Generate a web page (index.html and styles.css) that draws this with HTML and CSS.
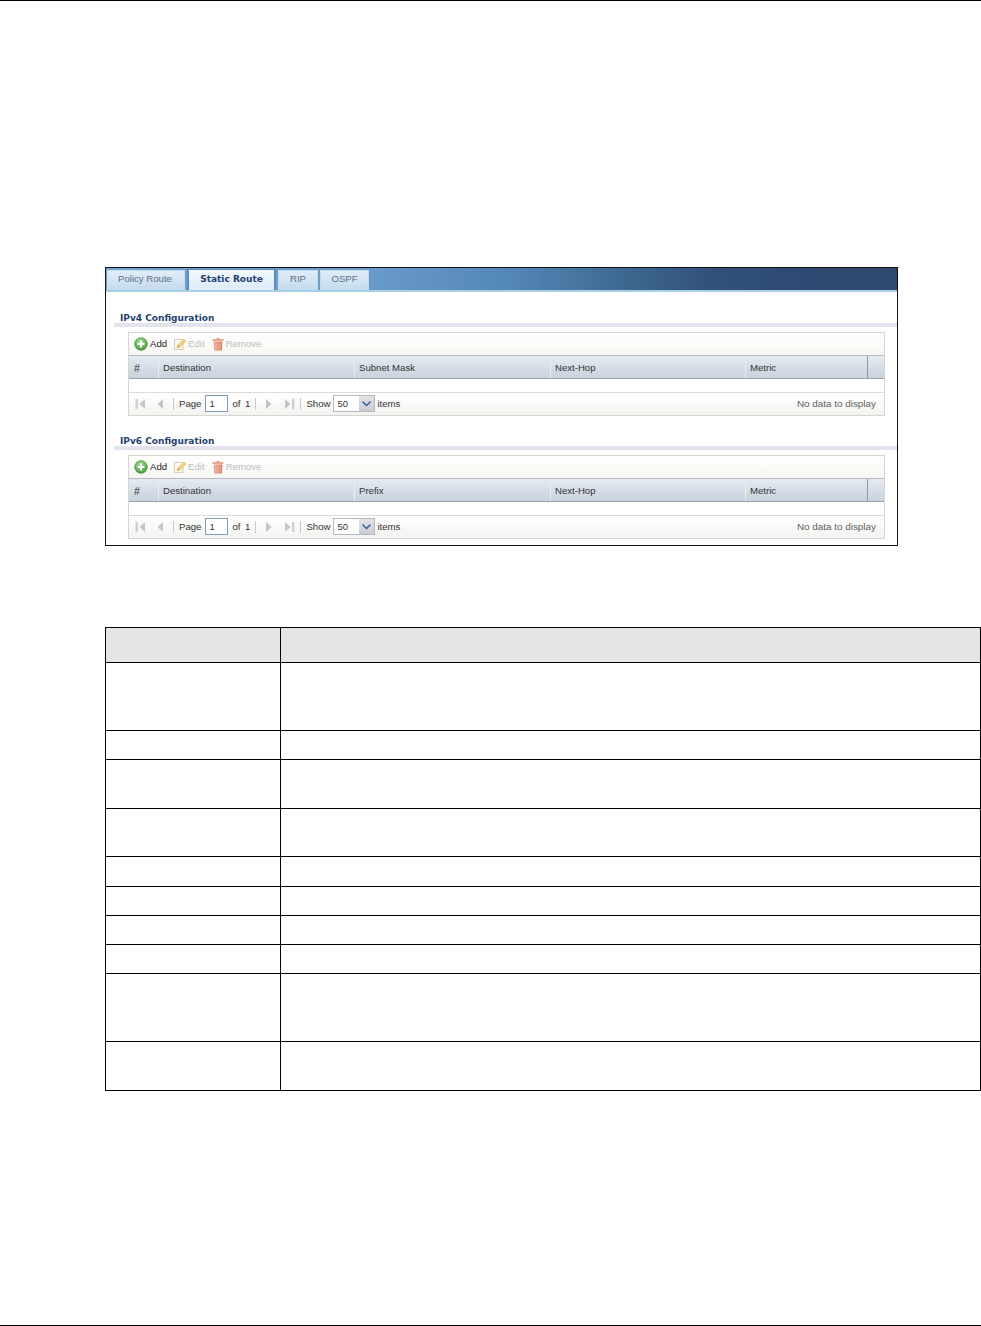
FILE: index.html
```html
<!DOCTYPE html>
<html lang="en">
<head>
<meta charset="utf-8">
<title>Static Route</title>
<link rel="stylesheet" href="styles.css">
</head>
<body>
<svg class="defs" width="0" height="0" aria-hidden="true">
  <defs>
    <radialGradient id="g-add" cx="45%" cy="35%" r="70%">
      <stop offset="0" stop-color="#b7e3a0"/><stop offset="0.6" stop-color="#66b65a"/><stop offset="1" stop-color="#3b8a3e"/>
    </radialGradient>
    <linearGradient id="g-bin" x1="0" x2="1" y1="0" y2="0">
      <stop offset="0" stop-color="#e9a48e"/><stop offset="0.5" stop-color="#e27f63"/><stop offset="1" stop-color="#d96f52"/>
    </linearGradient>
    <symbol id="i-add" viewBox="0 0 14 14">
      <circle cx="7" cy="7" r="6.3" fill="url(#g-add)" stroke="#4f9a4a" stroke-width="0.8"/>
      <path d="M7 3.6v6.8M3.6 7h6.8" stroke="#fff" stroke-width="2"/>
    </symbol>
    <symbol id="i-edit" viewBox="0 0 14 14">
      <path d="M1.5 2.5h8.5v10h-8.5z" fill="#fbf8ea" stroke="#cfc9ae"/>
      <path d="M4 11l1-3 6-6 2 2-6 6z" fill="#f0c860" stroke="#e0b050" stroke-width="0.5"/>
      <path d="M4 11l1-3 2 2z" fill="#d98f6a"/>
    </symbol>
    <symbol id="i-bin" viewBox="0 0 12 14">
      <path d="M4.5 1h3v1.2h-3z" fill="#d98a72"/>
      <path d="M0.5 2h11v2h-11z" fill="#e39a84"/>
      <path d="M1.5 4.5h9l-0.6 9h-7.8z" fill="url(#g-bin)"/>
      <path d="M4 6v6M6 6v6M8 6v6" stroke="#f3c3b3" stroke-width="0.6"/>
    </symbol>
    <symbol id="i-first" viewBox="0 0 11 12">
      <path d="M0.5 1h2.4v10H0.5z" fill="#ccd0d4"/>
      <path d="M10 1v10L4.5 6z" fill="#c2c6ca"/>
    </symbol>
    <symbol id="i-prev" viewBox="0 0 6 12">
      <path d="M6 1v10L0.5 6z" fill="#c2c6ca"/>
    </symbol>
    <symbol id="i-next" viewBox="0 0 6 12">
      <path d="M0 1v10L5.5 6z" fill="#c2c6ca"/>
    </symbol>
    <symbol id="i-last" viewBox="0 0 11 12">
      <path d="M1 1v10L6.5 6z" fill="#c2c6ca"/>
      <path d="M8 1h2.4v10H8z" fill="#ccd0d4"/>
    </symbol>
    <symbol id="i-down" viewBox="0 0 9 7">
      <path d="M1 1l3.5 3.6L8 1l0.8 1.3L4.5 6.4 0.2 2.3z" fill="#2f5a94"/>
    </symbol>
  </defs>
</svg>

<header class="page-rule"></header>

<main class="content">
  <figure class="shot">
    <nav class="tabbar">
      <a class="tab tab-policy">Policy Route</a>
      <a class="tab tab-static is-active">Static Route</a>
      <a class="tab tab-rip">RIP</a>
      <a class="tab tab-ospf">OSPF</a>
    </nav>

    <section class="section section-first">
      <h2 class="section-title">IPv4 Configuration</h2>
      <div class="panel">
        <div class="toolbar">
          <span class="tool tool-add"><svg class="ic ic14"><use href="#i-add"/></svg>Add</span>
          <span class="tool tool-edit is-off"><svg class="ic ic14"><use href="#i-edit"/></svg>Edit</span>
          <span class="tool tool-remove is-off"><svg class="ic ic12"><use href="#i-bin"/></svg>Remove</span>
        </div>
        <div class="thead">
          <span class="th">#</span><span class="th">Destination</span><span class="th">Subnet Mask</span><span class="th">Next-Hop</span><span class="th">Metric</span><span class="th th-end"></span>
        </div>
        <div class="tbody"></div>
        <div class="pager">
          <svg class="pg pg-first"><use href="#i-first"/></svg>
          <svg class="pg pg-prev"><use href="#i-prev"/></svg>
          <i class="sep sep-a"></i>
          <span class="pg-label">Page</span>
          <span class="page-input">1</span>
          <span class="pg-of">of 1</span>
          <i class="sep sep-b"></i>
          <svg class="pg pg-next"><use href="#i-next"/></svg>
          <svg class="pg pg-last"><use href="#i-last"/></svg>
          <i class="sep sep-c"></i>
          <span class="pg-label">Show</span>
          <span class="select"><span class="select-val">50</span><span class="select-btn"><svg class="ic-down"><use href="#i-down"/></svg></span></span>
          <span class="pg-items">items</span>
          <span class="pg-empty">No data to display</span>
        </div>
      </div>
    </section>

    <section class="section section-second">
      <h2 class="section-title">IPv6 Configuration</h2>
      <div class="panel">
        <div class="toolbar">
          <span class="tool tool-add"><svg class="ic ic14"><use href="#i-add"/></svg>Add</span>
          <span class="tool tool-edit is-off"><svg class="ic ic14"><use href="#i-edit"/></svg>Edit</span>
          <span class="tool tool-remove is-off"><svg class="ic ic12"><use href="#i-bin"/></svg>Remove</span>
        </div>
        <div class="thead">
          <span class="th">#</span><span class="th">Destination</span><span class="th">Prefix</span><span class="th">Next-Hop</span><span class="th">Metric</span><span class="th th-end"></span>
        </div>
        <div class="tbody"></div>
        <div class="pager">
          <svg class="pg pg-first"><use href="#i-first"/></svg>
          <svg class="pg pg-prev"><use href="#i-prev"/></svg>
          <i class="sep sep-a"></i>
          <span class="pg-label">Page</span>
          <span class="page-input">1</span>
          <span class="pg-of">of 1</span>
          <i class="sep sep-b"></i>
          <svg class="pg pg-next"><use href="#i-next"/></svg>
          <svg class="pg pg-last"><use href="#i-last"/></svg>
          <i class="sep sep-c"></i>
          <span class="pg-label">Show</span>
          <span class="select"><span class="select-val">50</span><span class="select-btn"><svg class="ic-down"><use href="#i-down"/></svg></span></span>
          <span class="pg-items">items</span>
          <span class="pg-empty">No data to display</span>
        </div>
      </div>
    </section>
  </figure>

  <table class="doc-table">
    <tbody>
      <tr class="r-head r35"><td></td><td></td></tr>
      <tr class="r68"><td></td><td></td></tr>
      <tr class="r29"><td></td><td></td></tr>
      <tr class="r49"><td></td><td></td></tr>
      <tr class="r48"><td></td><td></td></tr>
      <tr class="r30"><td></td><td></td></tr>
      <tr class="r29"><td></td><td></td></tr>
      <tr class="r29"><td></td><td></td></tr>
      <tr class="r29"><td></td><td></td></tr>
      <tr class="r68"><td></td><td></td></tr>
      <tr class="r49"><td></td><td></td></tr>
    </tbody>
  </table>
</main>

<footer class="page-foot"></footer>
</body>
</html>
```

FILE: styles.css
```css
* { box-sizing: border-box; }

html, body { margin: 0; padding: 0; }

body {
  width: 981px;
  height: 1326px;
  overflow: hidden;
  display: flex;
  flex-direction: column;
  background: #fff;
  font-family: "Liberation Sans", Arial, sans-serif;
  font-size: 9.6px;
  color: #333;
}

.defs { position: absolute; }

.page-rule { height: 1px; background: #000; flex: none; }
.page-foot { height: 1px; background: #000; flex: none; margin-top: auto; }

.content { padding: 266px 0 0 105px; flex: none; }

/* screenshot frame */
.shot {
  margin: 0;
  width: 793px;
  height: 279px;
  border: 1px solid #111;
  background: #fff;
}

.tabbar {
  height: 24px;
  display: flex;
  align-items: flex-end;
  padding-left: 1px;
  border-bottom: 2px solid #a9cfe8;
  background: linear-gradient(90deg, #6fa3d2 0, #6a9dcc 250px, #5488b7 400px, #3d6890 520px, #31507a 610px, #2f4a72 700px, #2f4870 100%);
}

.tab {
  height: 20px;
  display: flex;
  align-items: center;
  justify-content: center;
  color: #5d6f86;
  font-size: 9.6px;
  background: linear-gradient(180deg, #e3eef8 0, #d2e3f3 55%, #c3daee 100%);
  box-shadow: inset 0 0 0 1px #c5dbee;
  padding-bottom: 3px;
}

.tab-policy { width: 78px; padding-right: 2px; }
.tab-static { width: 89px; margin-left: 2px; }
.tab-rip { width: 40px; margin-left: 2px; }
.tab-ospf { width: 49px; margin-left: 2px; }

.tab.is-active {
  height: 21px;
  font-family: "DejaVu Sans", Verdana, sans-serif;
  font-weight: 700;
  font-size: 9px;
  color: #1e3f74;
  background: linear-gradient(180deg, #f2f8fd 0, #dcebf8 100%);
  box-shadow: none;
  border: 1px solid #5d8cb8;
  border-bottom: 0;
  border-left-width: 2px;
  border-right-width: 2px;
}

.section { padding-left: 8px; }
.section-first { padding-top: 18px; }
.section-second { padding-top: 17px; }

.section-title {
  margin: 0;
  height: 17px;
  padding: 1px 0 0 6px;
  font-family: "DejaVu Sans", Verdana, sans-serif;
  font-size: 9px;
  font-weight: 700;
  line-height: 14px;
  color: #1f3f72;
  border-bottom: 4px solid #e3e3ef;
}

.panel {
  margin: 5px 12px 0 14px;
  width: 757px;
  height: 84px;
  border: 1px solid #d6d6d0;
  background: #fff;
}

.toolbar {
  height: 22px;
  display: flex;
  align-items: center;
  padding: 0 0 1px 5px;
  background: linear-gradient(180deg, #fff 0, #f6f6f2 100%);
}

.tool { display: inline-flex; align-items: center; color: #222; }
.tool.is-off { color: #bdbdbd; }
.tool.is-off .ic { opacity: 0.85; }
.tool-add .ic { margin-right: 2px; }
.tool-edit { margin-left: 6px; }
.tool-edit .ic { margin-right: 1px; }
.tool-remove { margin-left: 7px; }
.tool-remove .ic { margin-right: 2px; }

.ic14 { width: 14px; height: 14px; }
.ic12 { width: 12px; height: 14px; }

.thead {
  height: 24px;
  display: grid;
  grid-template-columns: 29px 196px 196px 195px 122px 17px;
  border-top: 1px solid #b5bac0;
  border-bottom: 1px solid #98a4b2;
  background: linear-gradient(180deg, #e6ebf1 0, #d6dee7 50%, #c9d3de 100%);
}

.th {
  display: flex;
  align-items: center;
  padding: 1px 0 0 4px;
  color: #333;
  border-left: 1px solid #e6ecf2;
}
.th:first-child { border-left: 0; padding-left: 5px; font-size: 10.5px; }
.th-end { border-left: 1px solid #8f9aa6; }

.tbody { height: 13px; background: #fff; }

.pager {
  height: 23px;
  display: flex;
  align-items: center;
  padding: 0 8px 1px 6px;
  border-top: 1px solid #dcdcd8;
  background: linear-gradient(180deg, #fff 0, #f3f3f1 100%);
  color: #333;
}

.pg { height: 12px; flex: none; }
.pg-first { width: 11px; }
.pg-prev { width: 6px; margin-left: 11px; }
.pg-next { width: 6px; margin-left: 10px; }
.pg-last { width: 11px; margin-left: 12px; }

.sep { width: 1px; height: 12px; background: #c9c9c9; flex: none; }
.sep-a { margin-left: 10px; }
.sep-b { margin-left: 5px; }
.sep-c { margin-left: 5px; }

.pg-label { margin-left: 5px; }

.page-input {
  width: 23px;
  height: 17px;
  margin-left: 4px;
  padding-left: 3px;
  line-height: 15px;
  border: 1px solid #7f9db9;
  background: #fff;
  font-size: 9.5px;
}

.pg-of { width: 18px; margin-left: 4px; word-spacing: 2px; white-space: nowrap; }

.select {
  display: flex;
  width: 42px;
  height: 17px;
  margin-left: 3px;
  border: 1px solid #b4b9be;
  background: #fff;
}
.select-val { flex: 1; padding-left: 3px; line-height: 15px; font-size: 9.5px; }
.select-btn {
  width: 15px;
  display: flex;
  align-items: center;
  justify-content: center;
  background: linear-gradient(180deg, #e2e4e8 0, #c9ccd2 100%);
}
.ic-down { width: 9px; height: 7px; }

.pg-items { margin-left: 2px; }
.pg-empty { margin-left: auto; color: #5f5f5f; font-size: 9.9px; }

/* document table, cut off by the page's right edge */
.doc-table {
  margin-top: 81px;
  width: 876px;
  table-layout: fixed;
  border-collapse: separate;
  border-spacing: 0;
  border-top: 1px solid #000;
  border-left: 1px solid #000;
}

.doc-table td {
  padding: 0;
  border-right: 1px solid #000;
  border-bottom: 1px solid #000;
}
.doc-table td:first-child { width: 175px; }

.r-head td { background: #e5e5e5; }
.r29 td { height: 29px; }
.r30 td { height: 30px; }
.r35 td { height: 35px; }
.r48 td { height: 48px; }
.r49 td { height: 49px; }
.r68 td { height: 68px; }
```
